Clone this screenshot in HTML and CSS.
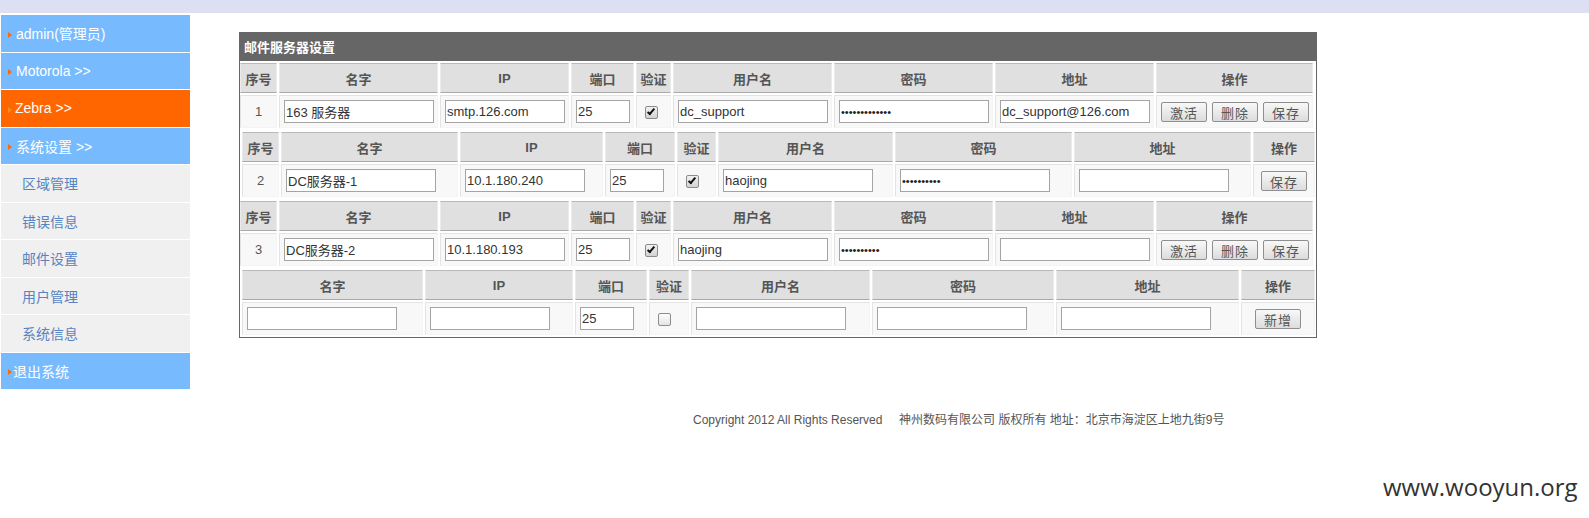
FILE: index.html
```html
<!DOCTYPE html>
<html lang="zh-CN">
<head>
<meta charset="utf-8">
<title>邮件服务器设置</title>
<link rel="stylesheet" href="styles.css">
</head>
<body>
<div class="topbar"></div>
<div class="layout">
  <ul class="sidebar">
    <li class="nav-item nav-top"><span class="arrow"></span>admin(管理员)</li>
    <li class="nav-item nav-top"><span class="arrow"></span>Motorola &gt;&gt;</li>
    <li class="nav-item nav-active"><span class="arrow"></span>Zebra &gt;&gt;</li>
    <li class="nav-item nav-top"><span class="arrow"></span>系统设置 &gt;&gt;</li>
    <li class="nav-item nav-sub">区域管理</li>
    <li class="nav-item nav-sub">错误信息</li>
    <li class="nav-item nav-sub">邮件设置</li>
    <li class="nav-item nav-sub">用户管理</li>
    <li class="nav-item nav-sub">系统信息</li>
    <li class="nav-item nav-top nav-exit"><span class="arrow"></span>退出系统</li>
  </ul>
  <div class="main">
    <div class="panel">
      <div class="panel-title">邮件服务器设置</div>
      <table class="grid grid-a">
        <tr><th>序号</th><th>名字</th><th>IP</th><th>端口</th><th>验证</th><th>用户名</th><th>密码</th><th>地址</th><th>操作</th></tr>
        <tr>
          <td class="no">1</td>
          <td><input class="in w150" type="text" value="163 服务器"></td>
          <td><input class="in w120" type="text" value="smtp.126.com"></td>
          <td><input class="in w54" type="text" value="25"></td>
          <td><input class="cb" type="checkbox" checked></td>
          <td><input class="in w150" type="text" value="dc_support"></td>
          <td><input class="in w150 pwd" type="password" value="dcsupport1234"></td>
          <td><input class="in w150" type="text" value="dc_support@126.com"></td>
          <td class="ops"><button class="btn">激活</button><button class="btn">删除</button><button class="btn">保存</button></td>
        </tr>
      </table>
      <table class="grid grid-b">
        <tr><th>序号</th><th>名字</th><th>IP</th><th>端口</th><th>验证</th><th>用户名</th><th>密码</th><th>地址</th><th>操作</th></tr>
        <tr>
          <td class="no">2</td>
          <td><input class="in w150" type="text" value="DC服务器-1"></td>
          <td><input class="in w120" type="text" value="10.1.180.240"></td>
          <td><input class="in w54" type="text" value="25"></td>
          <td><input class="cb" type="checkbox" checked></td>
          <td><input class="in w150" type="text" value="haojing"></td>
          <td><input class="in w150 pwd" type="password" value="haojing123"></td>
          <td><input class="in w150" type="text" value=""></td>
          <td class="ops"><button class="btn">保存</button></td>
        </tr>
      </table>
      <table class="grid grid-a">
        <tr><th>序号</th><th>名字</th><th>IP</th><th>端口</th><th>验证</th><th>用户名</th><th>密码</th><th>地址</th><th>操作</th></tr>
        <tr>
          <td class="no">3</td>
          <td><input class="in w150" type="text" value="DC服务器-2"></td>
          <td><input class="in w120" type="text" value="10.1.180.193"></td>
          <td><input class="in w54" type="text" value="25"></td>
          <td><input class="cb" type="checkbox" checked></td>
          <td><input class="in w150" type="text" value="haojing"></td>
          <td><input class="in w150 pwd" type="password" value="haojing123"></td>
          <td><input class="in w150" type="text" value=""></td>
          <td class="ops"><button class="btn">激活</button><button class="btn">删除</button><button class="btn">保存</button></td>
        </tr>
      </table>
      <table class="grid grid-c">
        <tr><th>名字</th><th>IP</th><th>端口</th><th>验证</th><th>用户名</th><th>密码</th><th>地址</th><th>操作</th></tr>
        <tr>
          <td><input class="in w150" type="text" value=""></td>
          <td><input class="in w120" type="text" value=""></td>
          <td><input class="in w54" type="text" value="25"></td>
          <td><input class="cb" type="checkbox"></td>
          <td><input class="in w150" type="text" value=""></td>
          <td><input class="in w150 pwd" type="password" value=""></td>
          <td><input class="in w150" type="text" value=""></td>
          <td class="ops"><button class="btn">新增</button></td>
        </tr>
      </table>
    </div>
  </div>
</div>
<div class="footer">Copyright 2012 All Rights Reserved&nbsp;&nbsp;&nbsp;&nbsp; 神州数码有限公司 版权所有 地址：北京市海淀区上地九街9号</div>
<div class="watermark">www.wooyun.org</div>
</body>
</html>
```
FILE: styles.css
```css
* { box-sizing: border-box; }
html, body { margin: 0; padding: 0; background: #fff; }
body {
  font-family: "Liberation Sans", Arial, "Noto Sans CJK SC", sans-serif;
  color: #333;
  position: relative;
  min-height: 518px;
}
.topbar { height: 13px; background: #dce0f2; }
.layout { display: flex; align-items: flex-start; }

/* sidebar */
.sidebar {
  list-style: none;
  margin: 2px 0 0 1px;
  padding: 0;
  width: 189px;
}
.nav-item {
  height: 37.5px;
  border-bottom: 1px solid #fff;
  display: flex;
  align-items: center;
  font-size: 14px;
  white-space: nowrap;
}
.nav-top { background: #77bbfe; color: #fff; padding-left: 7px; }
.nav-active { background: #ff6600; color: #fff; padding-left: 7px; }
.nav-sub { background: #f0f0f0; color: #5783c1; padding-left: 21px; }
.arrow {
  width: 0; height: 0;
  border-left: 4px solid #ff6a00;
  border-top: 3px solid transparent;
  border-bottom: 3px solid transparent;
  margin: 3px 4px 0 0;
}
.nav-active .arrow { border-left-color: #f0901c; margin-right: 3px; }
.nav-exit .arrow { margin-right: 1px; }

/* main panel */
.main { margin: 19px 0 0 49px; }
.panel { width: 1078px; border: 1px solid #666; border-top: 0; overflow: hidden; }
.panel-title {
  height: 29px;
  background: #666;
  color: #fff;
  font-weight: bold;
  font-size: 13px;
  padding-left: 4px;
  display: flex;
  align-items: center;
  font-family: "Noto Sans CJK SC", sans-serif;
}
.grid { width: 100%; border-spacing: 2px; table-layout: fixed; }
.grid-a { margin-left: -2px; }
.grid th {
  height: 30px;
  padding: 0;
  background: #e0e0e0;
  border: 1px solid;
  border-color: #b9b9b9 #ebebeb #a9a9a9 #ebebeb;
  font-size: 13px;
  font-weight: bold;
  color: #555;
  text-align: center;
}
.grid td {
  height: 33px;
  padding: 0 4px;
  background: #f8f8f8;
  border: 1px solid;
  border-color: #e3e3e3 #f4f4f4 #f4f4f4 #e3e3e3;
  font-size: 13px;
  color: #555;
  white-space: nowrap;
}
.grid td.no { text-align: center; }
.grid td.ops { text-align: center; }

.grid-a th:nth-child(1) { width: 37px; }
.grid-a th:nth-child(2) { width: 159px; }
.grid-a th:nth-child(3) { width: 129px; }
.grid-a th:nth-child(4) { width: 63px; }
.grid-a th:nth-child(5) { width: 35px; }
.grid-a th:nth-child(6) { width: 159px; }
.grid-a th:nth-child(7) { width: 159px; }
.grid-a th:nth-child(8) { width: 159px; }
.grid-a th:nth-child(9) { width: 157px; }

.grid-b th:nth-child(1) { width: 37px; }
.grid-b th:nth-child(2) { width: 177px; }
.grid-b th:nth-child(3) { width: 143px; }
.grid-b th:nth-child(4) { width: 70px; }
.grid-b th:nth-child(5) { width: 39px; }
.grid-b th:nth-child(6) { width: 175px; }
.grid-b th:nth-child(7) { width: 177px; }
.grid-b th:nth-child(8) { width: 177px; }
.grid-b th:nth-child(9) { width: 62px; }

.grid-c th:nth-child(1) { width: 181px; }
.grid-c th:nth-child(2) { width: 148px; }
.grid-c th:nth-child(3) { width: 72px; }
.grid-c th:nth-child(4) { width: 40px; }
.grid-c th:nth-child(5) { width: 179px; }
.grid-c th:nth-child(6) { width: 182px; }
.grid-c th:nth-child(7) { width: 183px; }
.grid-c th:nth-child(8) { width: 74px; }

/* form controls */
.in {
  height: 23px;
  margin: 0;
  padding: 0 1px;
  border: 1px solid #a4a4a4;
  background: #fff;
  font: 13px "Liberation Sans", Arial, "Noto Sans CJK SC", sans-serif;
  color: #333;
  vertical-align: middle;
  outline: none;
}
.w150 { width: 150px; }
.w120 { width: 120px; }
.w54 { width: 54px; }
.pwd { font-size: 11px; color: #222; }

.cb {
  -webkit-appearance: none;
  appearance: none;
  width: 13px;
  height: 13px;
  margin: 0 0 0 4px;
  border: 1px solid #8c8c8c;
  border-radius: 2px;
  background: linear-gradient(#fdfdfd, #e4e4e4);
  vertical-align: middle;
  position: relative;
}
.cb:checked { background: linear-gradient(#f2f2f2, #d2d2d2); }
.cb:checked::after {
  content: "";
  box-sizing: content-box;
  position: absolute;
  left: 3px;
  top: 0;
  width: 2px;
  height: 6px;
  border: solid #111;
  border-width: 0 2px 2px 0;
  transform: rotate(40deg);
}

.btn {
  width: 46px;
  height: 20px;
  margin: 0;
  padding: 0;
  border: 1px solid #8f8f8f;
  border-radius: 2px;
  background: linear-gradient(#f8f8f8, #dcdcdc);
  font: 13px "Noto Sans CJK SC", sans-serif;
  color: #555;
  vertical-align: middle;
  letter-spacing: 1px;
}
.btn + .btn { margin-left: 5px; }

.footer {
  margin-top: 20px;
  padding-left: 693px;
  font-size: 12px;
  line-height: 20px;
  color: #555;
  white-space: nowrap;
}
.watermark {
  position: absolute;
  left: 1383px;
  top: 471px;
  font: 24px/32px "Open Sans", sans-serif;
  color: #333;
}
```
